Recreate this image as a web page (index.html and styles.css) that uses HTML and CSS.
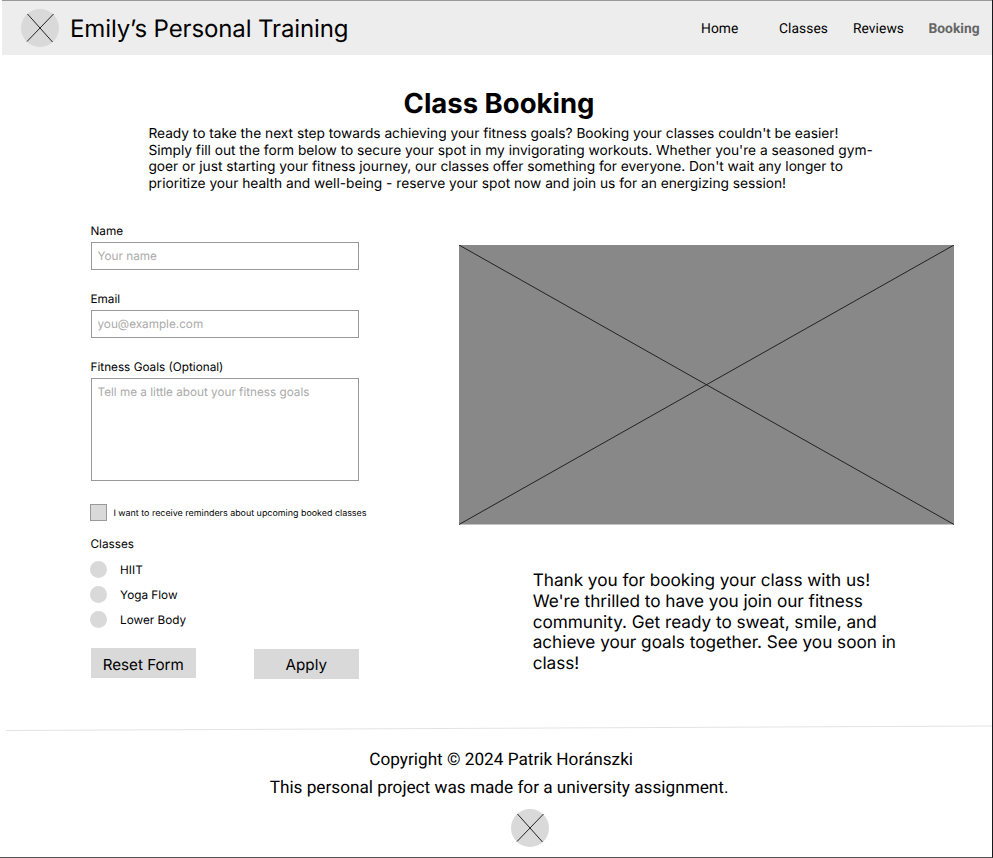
FILE: index.html
```html
<!DOCTYPE html>
<html lang="en">
<head>
<meta charset="utf-8">
<title>Emily’s Personal Training – Class Booking</title>
<link rel="stylesheet" href="styles.css">
</head>
<body>
<div class="page">
  <header class="header">
    <svg class="logo" viewBox="0 0 38 38"><circle cx="19" cy="19" r="19"/><path d="M6.5 5 31.5 33M32.5 5 6 32.5"/></svg>
    <span class="brand">Emily’s Personal Training</span>
    <nav class="nav">
      <a class="nav-home">Home</a>
      <a class="nav-classes">Classes</a>
      <a class="nav-reviews">Reviews</a>
      <a class="nav-booking">Booking</a>
    </nav>
  </header>
  <section class="intro">
    <h1>Class Booking</h1>
    <p>Ready to take the next step towards achieving your fitness goals? Booking your classes couldn't be easier!<br>Simply fill out the form below to secure your spot in my invigorating workouts. Whether you're a seasoned gym-<br>goer or just starting your fitness journey, our classes offer something for everyone. Don't wait any longer to<br>prioritize your health and well-being - reserve your spot now and join us for an energizing session!</p>
  </section>
  <main class="content">
    <form class="form">
      <label class="label" for="name">Name</label>
      <input class="field" id="name" type="text" placeholder="Your name">
      <label class="label" for="email">Email</label>
      <input class="field" id="email" type="email" placeholder="you@example.com">
      <label class="label" for="goals">Fitness Goals (Optional)</label>
      <textarea class="field goals" id="goals" placeholder="Tell me a little about your fitness goals"></textarea>
      <label class="reminder"><input class="check" type="checkbox"><span>I want to receive reminders about upcoming booked classes</span></label>
      <div class="classes-title">Classes</div>
      <label class="option"><input class="radio" type="radio" name="class">HIIT</label>
      <label class="option"><input class="radio" type="radio" name="class">Yoga Flow</label>
      <label class="option"><input class="radio" type="radio" name="class">Lower Body</label>
      <div class="actions">
        <button class="button" type="reset">Reset Form</button>
        <button class="button apply" type="button">Apply</button>
      </div>
    </form>
    <aside class="side">
      <svg class="photo" viewBox="0 0 495 280"><rect width="495" height="279.5"/><path d="M0 0 495 279.5M495 0 0 279.5"/></svg>
      <p class="thanks">Thank you for booking your class with us!<br>We're thrilled to have you join our fitness<br>community. Get ready to sweat, smile, and<br>achieve your goals together. See you soon in<br>class!</p>
    </aside>
  </main>
  <footer class="footer">
    <svg class="rule" viewBox="0 0 987 6"><path d="M0 5.5 987 1"/></svg>
    <p class="copyright">Copyright © 2024 Patrik Horánszki</p>
    <p class="note">This personal project was made for a university assignment.</p>
    <svg class="logo" viewBox="0 0 38 38"><circle cx="19" cy="19" r="19"/><path d="M6.5 5 31.5 33M32.5 5 6 32.5"/></svg>
  </footer>
</div>
</body>
</html>
```
FILE: styles.css
```css
* { box-sizing: border-box; text-rendering: geometricPrecision; }
body { margin: 0; background: #fff; color: #000; font-family: Inter, sans-serif; }
h1, p { margin: 0; }
.page { width: 993px; height: 858px; overflow: hidden; border-right: 1px solid #16181b; border-bottom: 1px solid #555; display: flex; flex-direction: column; }
.header { flex: none; display: flex; align-items: center; height: 55px; margin-left: 2px; padding-left: 19px; background: #ededed; border-top: 1px solid #999; }
.logo { display: block; width: 38px; height: 38px; fill: #d9d9d9; stroke: none; }
.logo path { fill: none; stroke: #222; stroke-width: 1; }
.brand { margin-left: 11px; padding-top: 2px; font-size: 24px; line-height: 30px; letter-spacing: -.12px; white-space: nowrap; }
.nav { display: flex; margin-left: auto; padding-top: 2px; font: 13.8px/19px Roboto, sans-serif; letter-spacing: .06px; white-space: nowrap; }
.nav a { display: block; }
.nav-home { width: 78px; }
.nav-classes { width: 74px; }
.nav-reviews { width: 75.5px; }
.nav-booking { width: 63.5px; font-weight: 700; color: #666; letter-spacing: 0; }
.intro { margin: 31px 0 0 148px; font-size: 13.75px; line-height: 16.6px; white-space: nowrap; }
.intro h1 { width: 702px; font-size: 27.5px; line-height: 34px; font-weight: 700; text-align: center; }
.intro p { margin: 6px 0 0 .4px; letter-spacing: -.02px; }
.content { display: flex; margin: 30px 0 0 90.5px; height: 490px; }
.form { width: 368.5px; }
.label { display: block; height: 20px; padding-top: 1px; font-size: 11.75px; line-height: 17px; }
.field { display: block; width: 268.5px; height: 28px; margin: 0 0 20px; padding: 0 6px; border: 1px solid #999; border-radius: 0; background: #fff; font: 11.73px/15px Inter, sans-serif; outline: none; }
.field::placeholder { color: #aaa; opacity: 1; }
.goals { height: 103px; margin-bottom: 23px; padding-top: 6px; resize: none; }
.reminder { display: flex; align-items: center; height: 17px; gap: 6px; font-size: 8.92px; white-space: nowrap; }
.reminder span { padding-top: 1px; }
.check { appearance: none; width: 17px; height: 17px; margin: 0 0 0 -.1px; background: #d9d9d9; border: 1px solid #999; }
.classes-title { margin: 15px 0 9px; font-size: 11.75px; line-height: 16px; }
.option { display: flex; align-items: center; gap: 12.8px; height: 17px; margin-bottom: 8px; font-size: 11.75px; }
.radio { appearance: none; width: 17px; height: 17px; margin: 0 0 0 -.2px; border-radius: 50%; background: #d9d9d9; }
.actions { display: flex; justify-content: space-between; width: 268.5px; margin-top: 20px; }
.button { width: 105.5px; height: 30px; padding: 2px 0 0; border: 0; background: #d9d9d9; color: #000; font: 15.2px Inter, sans-serif; }
.apply { margin-top: 1px; padding-top: 1px; }
.side { padding-top: 23px; }
.photo { display: block; width: 495px; height: 280px; fill: #888; }
.photo path { fill: none; stroke: #222; stroke-width: 1; }
.thanks { margin: 46px 0 0 73.7px; font-size: 17.2px; line-height: 20.65px; letter-spacing: -.025px; white-space: nowrap; }
.footer { margin-top: 13px; font: 17.2px/20px Roboto, sans-serif; white-space: nowrap; }
.rule { display: block; width: 987px; height: 6px; margin-left: 6px; }
.rule path { fill: none; stroke: #e3e3e3; stroke-width: 1; }
.copyright { margin: 19px 0 0 369.3px; }
.note { margin: 8px 0 11px 269.7px; }
.footer .logo { margin-left: 511.4px; }
```
